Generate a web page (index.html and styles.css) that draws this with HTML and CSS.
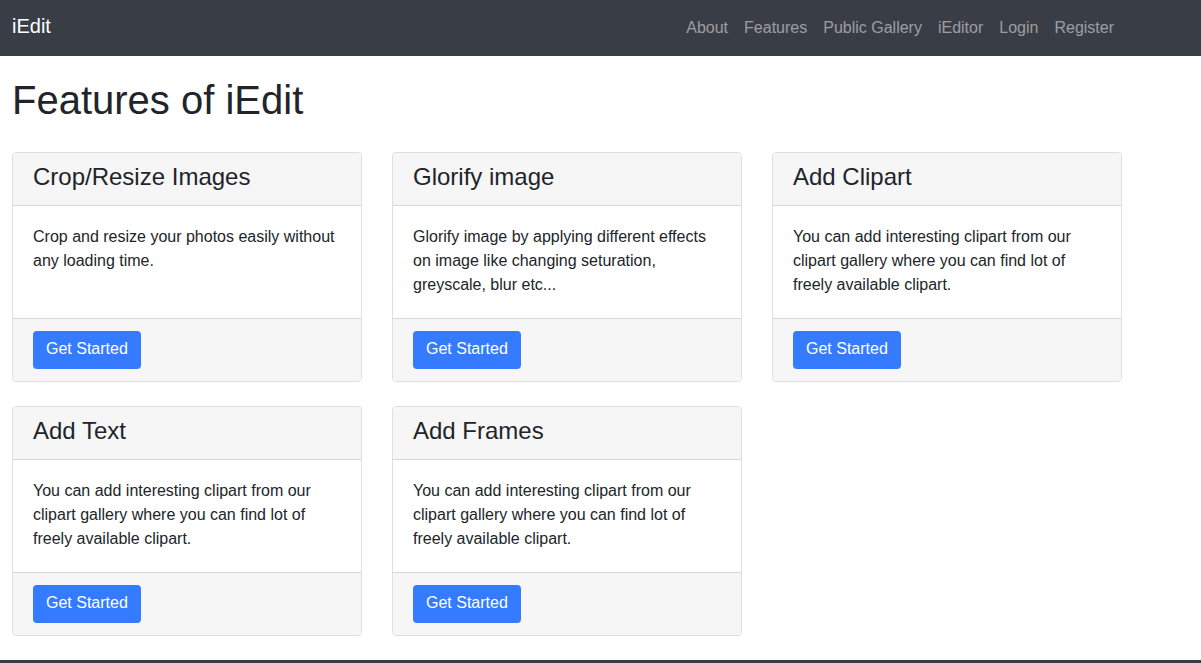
FILE: index.html
```html
<!DOCTYPE html>
<html lang="en">
<head>
<meta charset="utf-8">
<title>iEdit - Features</title>
<link rel="stylesheet" href="styles.css">
</head>
<body>
<nav class="navbar">
  <div class="wrap nav-inner">
    <a class="brand" href="#">iEdit</a>
    <ul class="nav-links">
      <li><a href="#">About</a></li>
      <li><a href="#">Features</a></li>
      <li><a href="#">Public Gallery</a></li>
      <li><a href="#">iEditor</a></li>
      <li><a href="#">Login</a></li>
      <li><a href="#">Register</a></li>
    </ul>
  </div>
</nav>
<main class="wrap">
  <h1 class="title">Features of iEdit</h1>
  <div class="cards">
    <div class="card">
      <div class="card-header"><h4>Crop/Resize Images</h4></div>
      <div class="card-body"><p>Crop and resize your photos easily without any loading time.</p></div>
      <div class="card-footer"><a class="btn" href="#">Get Started</a></div>
    </div>
    <div class="card">
      <div class="card-header"><h4>Glorify image</h4></div>
      <div class="card-body"><p>Glorify image by applying different effects on image like changing seturation, greyscale, blur etc...</p></div>
      <div class="card-footer"><a class="btn" href="#">Get Started</a></div>
    </div>
    <div class="card">
      <div class="card-header"><h4>Add Clipart</h4></div>
      <div class="card-body"><p>You can add interesting clipart from our clipart gallery where you can find lot of freely available clipart.</p></div>
      <div class="card-footer"><a class="btn" href="#">Get Started</a></div>
    </div>
    <div class="card">
      <div class="card-header"><h4>Add Text</h4></div>
      <div class="card-body"><p>You can add interesting clipart from our clipart gallery where you can find lot of freely available clipart.</p></div>
      <div class="card-footer"><a class="btn" href="#">Get Started</a></div>
    </div>
    <div class="card">
      <div class="card-header"><h4>Add Frames</h4></div>
      <div class="card-body"><p>You can add interesting clipart from our clipart gallery where you can find lot of freely available clipart.</p></div>
      <div class="card-footer"><a class="btn" href="#">Get Started</a></div>
    </div>
  </div>
</main>
<footer class="footer"></footer>
</body>
</html>
```

FILE: styles.css
```css
* { box-sizing: border-box; }
html, body { margin: 0; padding: 0; }
body {
  font-family: "Liberation Sans", Arial, sans-serif;
  font-size: 16px;
  line-height: 1.5;
  color: #212529;
  background: #fff;
}
a { text-decoration: none; }
.wrap {
  width: 1122px;
  padding-left: 12px;
}
.navbar {
  background: #393d45;
  height: 56px;
}
.nav-inner {
  display: flex;
  align-items: center;
  justify-content: space-between;
  height: 56px;
}
.brand {
  color: #fff;
  font-size: 20px;
  line-height: 30px;
  padding: 3px 0 7px;
}
.nav-links {
  list-style: none;
  margin: 0;
  padding: 0;
  display: flex;
}
.nav-links a {
  display: block;
  padding: 8px;
  line-height: 24px;
  color: rgba(255, 255, 255, 0.5);
}
.title {
  font-size: 40px;
  line-height: 48px;
  margin: 20px 0 28px;
  font-weight: normal;
}
.cards {
  display: grid;
  grid-template-columns: repeat(3, 350px);
  column-gap: 30px;
  row-gap: 24px;
}
.card {
  display: flex;
  flex-direction: column;
  border: 1px solid rgba(0, 0, 0, 0.125);
  border-radius: 4px;
  overflow: hidden;
}
.card-header {
  background: #f6f6f6;
  padding: 10px 20px 14px;
  border-bottom: 1px solid rgba(0, 0, 0, 0.125);
}
.card-header h4 {
  margin: 0;
  font-size: 24px;
  font-weight: normal;
  line-height: 28px;
}
.card-body {
  flex: 1;
  padding: 19px 20px 21px;
}
.card-body p { margin: 0; }
.card-footer {
  background: #f6f6f6;
  padding: 12px 20px;
  border-top: 1px solid rgba(0, 0, 0, 0.125);
}
.btn {
  display: inline-block;
  background: #347bff;
  color: #fff;
  padding: 6px 13px 8px;
  line-height: 24px;
  border-radius: 4px;
}
.footer {
  margin-top: 24px;
  height: 40px;
  background: #393d45;
}
```
